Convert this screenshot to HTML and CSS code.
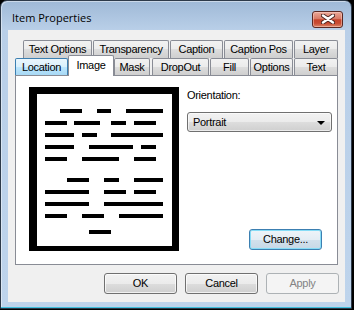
FILE: index.html
```html
<!DOCTYPE html>
<html>
<head>
<meta charset="utf-8">
<title>Item Properties</title>
<link rel="stylesheet" href="styles.css">
</head>
<body>
<div class="window">
  <div class="titlebar">
    <span class="title">Item Properties</span>
    <div class="close">
      <svg width="14" height="10" viewBox="0 0 14 10">
        <path d="M2 1.5 L12 8.5 M12 1.5 L2 8.5" stroke="#4a2420" stroke-width="4.2" stroke-linecap="round" fill="none"/>
        <path d="M2 1.5 L12 8.5 M12 1.5 L2 8.5" stroke="#ffffff" stroke-width="2.4" stroke-linecap="round" fill="none"/>
      </svg>
    </div>
  </div>
  <div class="client">
    <div class="tabs">
      <div class="tabrow back">
        <div class="tab t-textopt">Text Options</div>
        <div class="tab t-transp">Transparency</div>
        <div class="tab t-caption">Caption</div>
        <div class="tab t-cappos">Caption Pos</div>
        <div class="tab t-layer">Layer</div>
      </div>
      <div class="tabrow front">
        <div class="tab hover t-location">Location</div>
        <div class="tab selected t-image">Image</div>
        <div class="tab t-mask">Mask</div>
        <div class="tab t-dropout">DropOut</div>
        <div class="tab t-fill">Fill</div>
        <div class="tab t-options">Options</div>
        <div class="tab t-text">Text</div>
      </div>
    </div>
    <div class="panel">
      <div class="preview">
        <svg width="135" height="152" viewBox="0 0 135 152">
          <g fill="#000">
            <rect x="23" y="15" width="22" height="4"/>
            <rect x="60" y="15" width="14" height="4"/>
            <rect x="89" y="15" width="37" height="4"/>

            <rect x="8" y="27" width="22" height="4"/>
            <rect x="37" y="27" width="26" height="4"/>
            <rect x="74" y="27" width="15" height="4"/>
            <rect x="97" y="27" width="22" height="4"/>

            <rect x="8" y="39" width="29" height="4"/>
            <rect x="45" y="39" width="15" height="4"/>
            <rect x="74" y="39" width="52" height="4"/>

            <rect x="8" y="51" width="29" height="4"/>
            <rect x="52" y="51" width="44" height="4"/>
            <rect x="104" y="51" width="15" height="4"/>

            <rect x="8" y="63" width="22" height="4"/>
            <rect x="45" y="63" width="37" height="4"/>
            <rect x="97" y="63" width="22" height="4"/>

            <rect x="30" y="84" width="22" height="4"/>
            <rect x="67" y="84" width="15" height="4"/>
            <rect x="97" y="84" width="29" height="4"/>

            <rect x="8" y="96" width="44" height="4"/>
            <rect x="67" y="96" width="22" height="4"/>
            <rect x="97" y="96" width="22" height="4"/>

            <rect x="8" y="108" width="44" height="4"/>
            <rect x="67" y="108" width="59" height="4"/>

            <rect x="8" y="120" width="22" height="4"/>
            <rect x="45" y="120" width="22" height="4"/>
            <rect x="82" y="120" width="44" height="4"/>

            <rect x="52" y="136" width="22" height="4"/>
          </g>
        </svg>
      </div>
      <div class="side">
        <div class="label">Orientation:</div>
        <div class="select">
          <span class="select-text">Portrait</span>
          <span class="arrow"></span>
        </div>
        <button class="btn default change">Change...</button>
      </div>
    </div>
    <div class="actions">
      <button class="btn">OK</button>
      <button class="btn">Cancel</button>
      <button class="btn disabled">Apply</button>
    </div>
  </div>
</div>
</body>
</html>
```

FILE: styles.css
```css
html, body {
  margin: 0;
  padding: 0;
  background: #000;
}

body {
  width: 354px;
  height: 310px;
  overflow: hidden;
  font-family: "Liberation Sans", Arial, sans-serif;
  font-size: 11px;
  letter-spacing: -0.3px;
  color: #000;
}

.window {
  box-sizing: border-box;
  width: 352px;
  height: 309px;
  border: 1px solid #2d3a4a;
  border-radius: 7px 7px 0 0;
  background: linear-gradient(to bottom, #9fb9d7 0px, #b9cfe8 29px, #bed4ec 100%);
  box-shadow: inset 0 -1px 0 #3fc1df, inset 1px 1px 0 rgba(255,255,255,0.45);
  display: flex;
  flex-direction: column;
}

.titlebar {
  height: 29px;
  display: flex;
  align-items: center;
  padding-left: 11px;
  padding-right: 8px;
  flex: none;
}

.title {
  font-family: "Open Sans", "Noto Sans", sans-serif;
  font-size: 11px;
  letter-spacing: 0;
  color: #000;
  flex: 1;
  margin-top: 3px;
}

.close {
  box-sizing: border-box;
  width: 31px;
  height: 17px;
  margin-top: 7px;
  border: 1px solid #5b2822;
  border-radius: 3px;
  background: linear-gradient(to bottom, #eaa898 0%, #d97a66 45%, #c5432a 52%, #c94b32 75%, #da8669 100%);
  box-shadow: inset 0 0 0 1px rgba(255,220,210,0.45);
  display: flex;
  align-items: center;
  justify-content: center;
}

.close svg {
  display: block;
}

.client {
  flex: 1;
  margin: 0 6px 6px 7px;
  background: #f0f0f0;
  padding: 10px 7px 0 7px;
}

.tabs {
  display: flex;
  flex-direction: column;
}

.tabrow {
  display: flex;
}

.tabrow.back {
  height: 18px;
  margin-left: 8px;
  gap: 1px;
}

.tabrow.front {
  height: 17px;
  align-items: flex-end;
}

.tab {
  box-sizing: border-box;
  height: 100%;
  border: 1px solid #898c95;
  border-bottom: none;
  border-radius: 2px 2px 0 0;
  background: linear-gradient(to bottom, #f2f2f2 0%, #ebebeb 50%, #dddddd 50%, #cfcfcf 100%);
  text-align: center;
  line-height: 16px;
  white-space: nowrap;
  overflow: hidden;
  flex: none;
}

.tab.hover {
  border-color: #3c7fb1;
  background: linear-gradient(to bottom, #eaf6fd 0%, #d9f0fc 50%, #bee6fd 50%, #a7d9f5 100%);
}

.tab.selected {
  position: relative;
  z-index: 1;
  height: 21px;
  margin-bottom: -1px;
  background: #fff;
  line-height: 18px;
}

.t-textopt { width: 69px; }
.t-transp { width: 76px; }
.t-caption { width: 53px; }
.t-cappos { width: 69px; }
.t-layer { width: 44px; }

.t-location { width: 53px; }
.t-image { width: 46px; }
.t-mask { width: 36px; }
.t-dropout { width: 57px; margin-left: 2px; }
.t-fill { width: 39px; margin-left: 1px; }
.t-options { width: 43px; margin-left: 1px; }
.t-text { width: 44px; margin-left: 1px; }

.panel {
  box-sizing: border-box;
  height: 190px;
  border: 1px solid #898c95;
  background: #fff;
  display: flex;
  align-items: flex-start;
  padding: 11px 0 0 13px;
}

.preview {
  box-sizing: border-box;
  width: 150px;
  height: 164px;
  border-style: solid;
  border-color: #000;
  border-width: 7px 7px 5px 8px;
  background: #fff;
  flex: none;
}

.preview svg {
  display: block;
}

.side {
  width: 145px;
  height: 164px;
  margin-left: 8px;
  display: flex;
  flex-direction: column;
}

.label {
  margin-top: 2px;
  line-height: 13px;
}

.select {
  box-sizing: border-box;
  margin-top: 10px;
  height: 20px;
  border: 1px solid #707070;
  border-radius: 3px;
  background: linear-gradient(to bottom, #f2f2f2 0%, #ebebeb 50%, #dddddd 50%, #cfcfcf 100%);
  box-shadow: inset 0 0 0 1px rgba(255,255,255,0.6);
  display: flex;
  align-items: center;
  padding: 0 6px 0 5px;
}

.select-text {
  flex: 1;
  line-height: 13px;
}

.arrow {
  width: 0;
  height: 0;
  border-left: 4px solid transparent;
  border-right: 4px solid transparent;
  border-top: 4px solid #000;
  margin-top: 1px;
}

.btn {
  box-sizing: border-box;
  width: 73px;
  height: 21px;
  padding: 0;
  border: 1px solid #707070;
  border-radius: 3px;
  background: linear-gradient(to bottom, #f2f2f2 0%, #ebebeb 50%, #dddddd 50%, #cfcfcf 100%);
  box-shadow: inset 0 0 0 1px rgba(255,255,255,0.7);
  font-family: "Liberation Sans", Arial, sans-serif;
  font-size: 11px;
  letter-spacing: -0.3px;
  color: #000;
  line-height: 17px;
  text-align: center;
}

.btn.default {
  border-color: #3c7fb1;
  background: linear-gradient(to bottom, #eef4f9 0%, #e4edf4 50%, #d3e1ec 50%, #c7d8e6 100%);
  box-shadow: inset 0 0 0 1px #86dcf6;
}

.btn.disabled {
  border-color: #adb2b5;
  background: #f4f4f4;
  box-shadow: none;
  color: #838383;
}

.change {
  margin-top: auto;
  margin-bottom: 1px;
  margin-left: 62px;
}

.actions {
  display: flex;
  justify-content: flex-end;
  gap: 8px;
  margin-top: 8px;
  margin-right: -1px;
}
```
